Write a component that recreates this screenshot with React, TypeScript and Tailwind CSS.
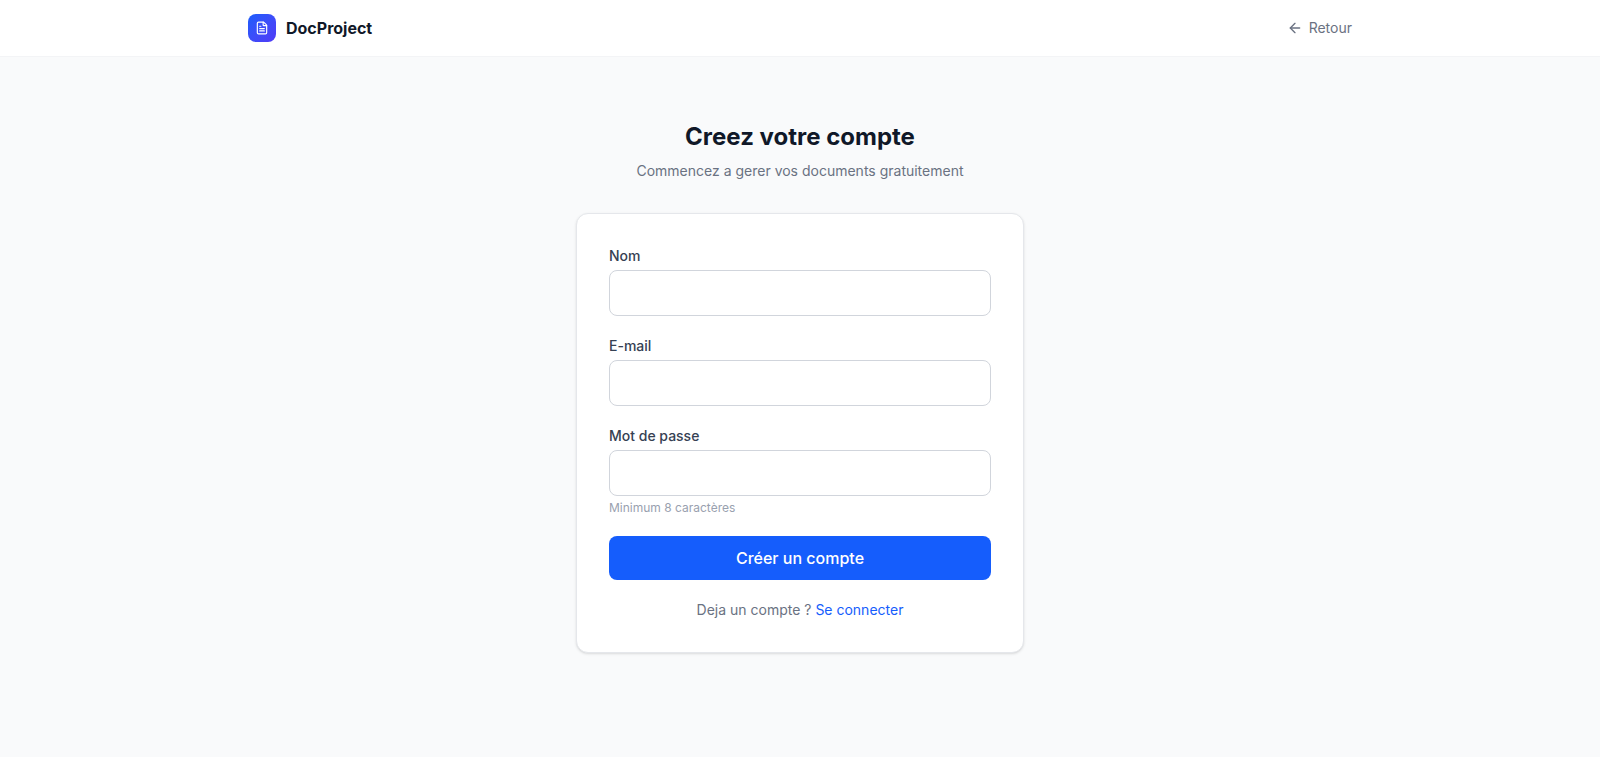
import React from "react";
import { ArrowLeft, FileText } from "lucide-react";

const inputClass =
  "mt-1 block h-[46px] w-full rounded-lg border border-gray-300 bg-white px-4 text-base text-gray-900 outline-none focus:border-blue-500";

function Field({ id, label, type, hint }: { id: string; label: string; type: string; hint?: string }) {
  return (
    <div>
      <label htmlFor={id} className="block text-sm font-medium text-gray-700">
        {label}
      </label>
      <input id={id} name={id} type={type} className={inputClass} />
      {hint && <p className="mt-1 text-xs text-gray-400">{hint}</p>}
    </div>
  );
}

export default function App() {
  return (
    <div className="flex min-h-screen flex-col bg-gray-50 font-['Inter',sans-serif] antialiased">
      <header className="border-b border-gray-100 bg-white">
        <div className="mx-auto flex h-14 w-full max-w-6xl items-center justify-between px-6">
          <a href="#" className="flex items-center gap-2.5">
            <span className="flex size-7 items-center justify-center rounded-lg bg-linear-to-br from-blue-600 to-indigo-600">
              <FileText className="size-3.5 text-white" aria-hidden="true" />
            </span>
            <span className="text-base font-bold text-gray-900">DocProject</span>
          </a>
          <a href="#" className="flex items-center gap-1.5 text-sm text-gray-500">
            <ArrowLeft className="size-4" aria-hidden="true" />
            Retour
          </a>
        </div>
      </header>

      <main className="flex flex-1 justify-center px-4 py-16">
        <div className="w-full max-w-md">
          <div className="mb-8 text-center">
            <h1 className="text-2xl font-bold text-gray-900">Creez votre compte</h1>
            <p className="mt-2 text-sm text-gray-500">Commencez a gerer vos documents gratuitement</p>
          </div>
          <div className="rounded-xl border border-gray-200 bg-white p-8 shadow-sm">
            <form className="space-y-5" onSubmit={(e) => e.preventDefault()}>
              <Field id="name" label="Nom" type="text" />
              <Field id="email" label="E-mail" type="email" />
              <Field id="password" label="Mot de passe" type="password" hint="Minimum 8 caractères" />
              <button type="submit" className="h-11 w-full rounded-lg bg-blue-600 text-base font-medium text-white">
                Créer un compte
              </button>
            </form>
            <p className="mt-5 text-center text-sm text-gray-500">
              Deja un compte ?{" "}
              <a href="#" className="text-blue-600">
                Se connecter
              </a>
            </p>
          </div>
        </div>
      </main>
    </div>
  );
}
